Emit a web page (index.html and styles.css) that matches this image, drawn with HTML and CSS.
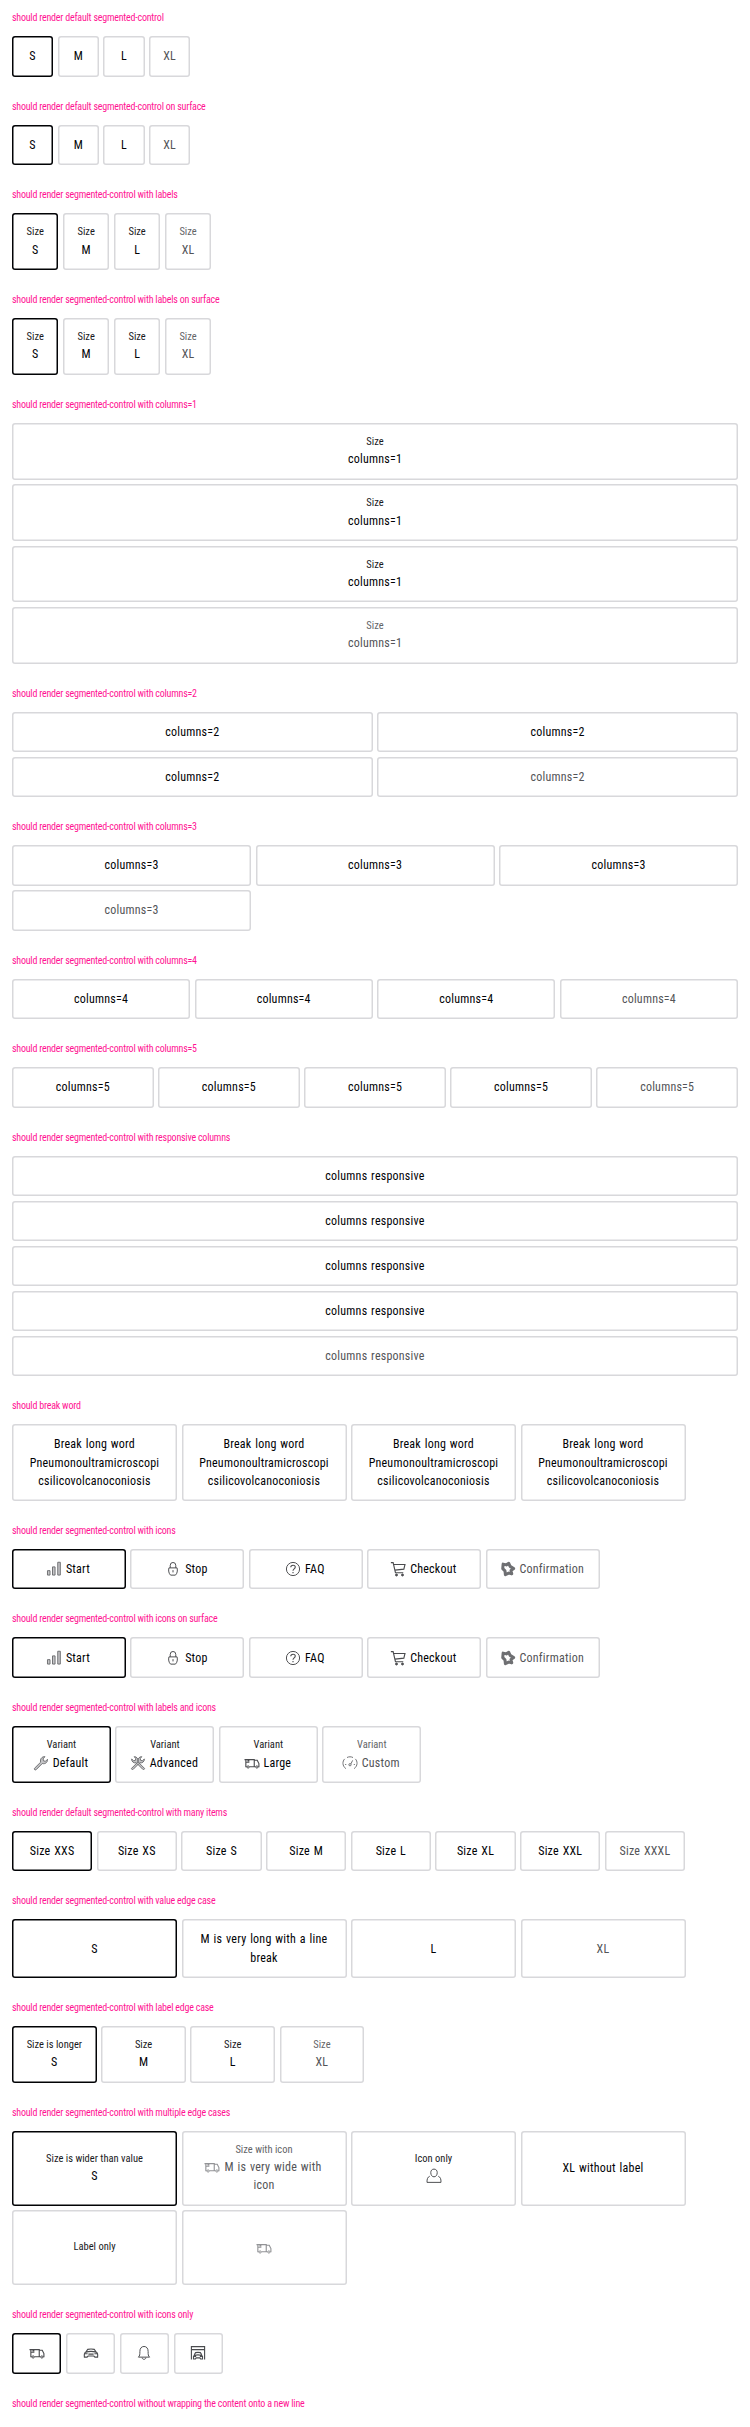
FILE: index.html
```html
<!DOCTYPE html>
<html lang="en">
<head>
<meta charset="utf-8">
<title>Segmented control</title>
<link rel="stylesheet" href="styles.css">
</head>
<body>
<svg class="sprite" aria-hidden="true">
  <symbol id="chart" viewBox="0 0 24 24"><path class="tint" d="M3.300 14.200h3.400v5.900H3.300zM10 9.200h3.400v10.900H10zM17 3h3.400v17.100H17z"/></symbol>
  <symbol id="lock" viewBox="0 0 24 24"><path d="M8.300 10.500V7.200a3.700 3.900 0 0 1 7.400 0v3.300M6.600 10.500h10.800c1 3.700 .2 7.500-2.200 9.700H8.800c-2.400-2.200-3.200-6-2.200-9.700zM12 13.500v3"/></symbol>
  <symbol id="help" viewBox="0 0 24 24"><circle cx="12" cy="12" r="8.800"/><path class="bold" d="M9 9.600C9.100 6.200 15 6 15 9.400c0 2.500-3 2.300-3 5M12 16v1.600"/></symbol>
  <symbol id="cart" viewBox="0 0 24 24"><path class="bold" d="M2.500 3.500h3L8.600 17H19M6.300 6h15l-1.500 6.200L8 13.500"/><circle class="solid" cx="10" cy="20" r="1.300"/><circle class="solid" cx="18" cy="20" r="1.300"/></symbol>
  <symbol id="gear" viewBox="0 0 24 24"><path class="thick" d="M5.500 5.500l4.300 1L13 4.500l1.800 4 4.700 3-3.500 2.500 1 4.500-4-1-4.500 2-.5-5-3-3z"/></symbol>
  <symbol id="wrench" viewBox="0 0 24 24"><path class="tint" d="M3.200 19.200l8.300-8.300c-1-4 1.500-7.500 5.700-7.400L14.800 6.500l.5 2.700 2.700.5 2.700-2.700c.3 4.200-3.200 6.800-7 5.700l-8.300 8.300c-1.500.8-3-.6-2.200-1.800z"/></symbol>
  <symbol id="tools" viewBox="0 0 24 24"><path class="tint" d="M3.500 19l8.500-8.500c-.8-3.800 1.500-7 5-7L15 6.200l.5 2.300 2.500.5 2.500-2.500c.3 3.800-3 6-6.200 5.200L5.500 20.500c-1.500.6-2.800-.6-2-1.500zM20.500 19L12 10.500c.8-3.800-1.500-7-5-7L9 6.200l-.5 2.300L6 9 3.500 6.500C3.200 10.300 6.500 12.500 9.700 11.700l8.800 8.800c1.500.6 2.800-.6 2-1.500z"/></symbol>
  <symbol id="truck" viewBox="0 0 24 24"><path class="bold" d="M5.200 17H3.800V7.500H15V17H8.500M15 8.300h4l2.200 4.500V17h-1M15 17h1.800M2 7.500h3M4 11h4.500M6 9.200h2.500"/><circle cx="6.800" cy="17.300" r="1.500"/><circle cx="18.500" cy="17.300" r="1.500"/></symbol>
  <symbol id="gauge" viewBox="0 0 24 24"><path d="M6.500 19.500C1.500 16 1.700 9.500 5 6.500M8 4.700c2.500-1.300 5.500-1.300 8 0M19 6.500c3.300 3 3.500 9.500-1.500 13M15.500 8.500l-2.300 4.700M5.500 14h1.500M17 14h1.500"/><circle cx="12" cy="14.300" r="1.500"/></symbol>
  <symbol id="car" viewBox="0 0 24 24"><path class="bold" d="M5.200 10.800L7.500 7.200c3-.7 6-.7 9 0l2.300 3.600M5.200 10.800c4.500-1.200 9-1.200 13.600 0M5.200 10.800c-2.200 1-2.500 3-2 6.700h3.500l1.500-1.500h7.600l1.500 1.500h3.500c.5-3.700.2-5.700-2-6.700M4 13h3.500M16.500 13H20M8.500 13.500h7"/></symbol>
  <symbol id="bell" viewBox="0 0 24 24"><path d="M4.500 17.500c2-1.700 2-3.500 2-7.500 0-4.300 2.200-6.700 5.500-6.700s5.500 2.400 5.500 6.700c0 4 0 5.800 2 7.500zM9.500 18.200c.2 3 4.800 3 5 0"/></symbol>
  <symbol id="garage" viewBox="0 0 24 24"><path class="bold" d="M3.200 20.500V3.500h17.600v17M3.200 7.500h17.600M7 14.500l1.700-3c2.200-.5 4.400-.5 6.600 0l1.700 3M6 20v-3.500c1.500-2.700 10.500-2.700 12 0V20h-2.500l-1-1.500h-5l-1 1.500zM7 16.500h2.500M14.500 16.500H17"/></symbol>
  <symbol id="user" viewBox="0 0 24 24"><path d="M12 2.800c-2.800 0-4.300 2-4.300 4.700 0 3.200 1.700 5.600 4.300 5.600s4.300-2.400 4.300-5.600c0-2.700-1.500-4.700-4.300-4.700zM6.300 12.300C3.500 13.500 2.500 16 2.700 20.500h18.600c.2-4.500-.8-7-3.600-8.200"/></symbol>
</svg>

<section>
  <h2>should render default segmented-control</h2>
  <div class="group w-s"><div class="item on">S</div><div class="item">M</div><div class="item">L</div><div class="item off">XL</div></div>
</section>
<section>
  <h2>should render default segmented-control on surface</h2>
  <div class="group w-s"><div class="item on">S</div><div class="item">M</div><div class="item">L</div><div class="item off">XL</div></div>
</section>
<section>
  <h2>should render segmented-control with labels</h2>
  <div class="group w-label"><div class="item on"><small>Size</small>S</div><div class="item"><small>Size</small>M</div><div class="item"><small>Size</small>L</div><div class="item off"><small>Size</small>XL</div></div>
</section>
<section>
  <h2>should render segmented-control with labels on surface</h2>
  <div class="group w-label"><div class="item on"><small>Size</small>S</div><div class="item"><small>Size</small>M</div><div class="item"><small>Size</small>L</div><div class="item off"><small>Size</small>XL</div></div>
</section>
<section>
  <h2>should render segmented-control with columns=1</h2>
  <div class="group"><div class="item"><small>Size</small>columns=1</div><div class="item"><small>Size</small>columns=1</div><div class="item"><small>Size</small>columns=1</div><div class="item off"><small>Size</small>columns=1</div></div>
</section>
<section>
  <h2>should render segmented-control with columns=2</h2>
  <div class="group cols-2"><div class="item">columns=2</div><div class="item">columns=2</div><div class="item">columns=2</div><div class="item off">columns=2</div></div>
</section>
<section>
  <h2>should render segmented-control with columns=3</h2>
  <div class="group cols-3"><div class="item">columns=3</div><div class="item">columns=3</div><div class="item">columns=3</div><div class="item off">columns=3</div></div>
</section>
<section>
  <h2>should render segmented-control with columns=4</h2>
  <div class="group cols-4"><div class="item">columns=4</div><div class="item">columns=4</div><div class="item">columns=4</div><div class="item off">columns=4</div></div>
</section>
<section>
  <h2>should render segmented-control with columns=5</h2>
  <div class="group cols-5"><div class="item">columns=5</div><div class="item">columns=5</div><div class="item">columns=5</div><div class="item">columns=5</div><div class="item off">columns=5</div></div>
</section>
<section>
  <h2>should render segmented-control with responsive columns</h2>
  <div class="group"><div class="item">columns responsive</div><div class="item">columns responsive</div><div class="item">columns responsive</div><div class="item">columns responsive</div><div class="item off">columns responsive</div></div>
</section>
<section>
  <h2>should break word</h2>
  <div class="group w-max"><div class="item">Break long word<br>Pneumonoultramicroscopi<br>csilicovolcanoconiosis</div><div class="item">Break long word<br>Pneumonoultramicroscopi<br>csilicovolcanoconiosis</div><div class="item">Break long word<br>Pneumonoultramicroscopi<br>csilicovolcanoconiosis</div><div class="item">Break long word<br>Pneumonoultramicroscopi<br>csilicovolcanoconiosis</div></div>
</section>
<section>
  <h2>should render segmented-control with icons</h2>
  <div class="group w-icon">
    <div class="item on"><span><svg class="icon"><use href="#chart"/></svg>Start</span></div>
    <div class="item"><span><svg class="icon"><use href="#lock"/></svg>Stop</span></div>
    <div class="item"><span><svg class="icon"><use href="#help"/></svg>FAQ</span></div>
    <div class="item"><span><svg class="icon"><use href="#cart"/></svg>Checkout</span></div>
    <div class="item off"><span><svg class="icon"><use href="#gear"/></svg>Confirmation</span></div>
  </div>
</section>
<section>
  <h2>should render segmented-control with icons on surface</h2>
  <div class="group w-icon">
    <div class="item on"><span><svg class="icon"><use href="#chart"/></svg>Start</span></div>
    <div class="item"><span><svg class="icon"><use href="#lock"/></svg>Stop</span></div>
    <div class="item"><span><svg class="icon"><use href="#help"/></svg>FAQ</span></div>
    <div class="item"><span><svg class="icon"><use href="#cart"/></svg>Checkout</span></div>
    <div class="item off"><span><svg class="icon"><use href="#gear"/></svg>Confirmation</span></div>
  </div>
</section>
<section>
  <h2>should render segmented-control with labels and icons</h2>
  <div class="group w-variant">
    <div class="item on"><small>Variant</small><span><svg class="icon"><use href="#wrench"/></svg>Default</span></div>
    <div class="item"><small>Variant</small><span><svg class="icon"><use href="#tools"/></svg>Advanced</span></div>
    <div class="item"><small>Variant</small><span><svg class="icon"><use href="#truck"/></svg>Large</span></div>
    <div class="item off"><small>Variant</small><span><svg class="icon"><use href="#gauge"/></svg>Custom</span></div>
  </div>
</section>
<section>
  <h2>should render default segmented-control with many items</h2>
  <div class="group w-many"><div class="item on">Size XXS</div><div class="item">Size XS</div><div class="item">Size S</div><div class="item">Size M</div><div class="item">Size L</div><div class="item">Size XL</div><div class="item">Size XXL</div><div class="item off">Size XXXL</div></div>
</section>
<section>
  <h2>should render segmented-control with value edge case</h2>
  <div class="group w-max"><div class="item on">S</div><div class="item">M is very long with a line<br>break</div><div class="item">L</div><div class="item off">XL</div></div>
</section>
<section>
  <h2>should render segmented-control with label edge case</h2>
  <div class="group w-longer"><div class="item on"><small>Size is longer</small>S</div><div class="item"><small>Size</small>M</div><div class="item"><small>Size</small>L</div><div class="item off"><small>Size</small>XL</div></div>
</section>
<section>
  <h2>should render segmented-control with multiple edge cases</h2>
  <div class="group w-max even">
    <div class="item on"><small>Size is wider than value</small>S</div>
    <div class="item off muted"><small>Size with icon</small><span><svg class="icon"><use href="#truck"/></svg>M is very wide with<br></span>icon</div>
    <div class="item"><small>Icon only</small><svg class="icon alone"><use href="#user"/></svg></div>
    <div class="item">XL without label</div>
    <div class="item"><small>Label only</small></div>
    <div class="item off muted"><svg class="icon alone"><use href="#truck"/></svg></div>
  </div>
</section>
<section>
  <h2>should render segmented-control with icons only</h2>
  <div class="group w-glyph">
    <div class="item on"><svg class="icon alone"><use href="#truck"/></svg></div>
    <div class="item"><svg class="icon alone"><use href="#car"/></svg></div>
    <div class="item"><svg class="icon alone"><use href="#bell"/></svg></div>
    <div class="item"><svg class="icon alone"><use href="#garage"/></svg></div>
  </div>
</section>
<section>
  <h2>should render segmented-control without wrapping the content onto a new line</h2>
</section>
</body>
</html>
```
FILE: styles.css
```css
* { box-sizing: border-box; }
html { overflow: hidden; }
body {
  margin: 0;
  padding: 10px 12px 0;
  background: #fff;
  color: #010205;
  font-family: Roboto, "Liberation Sans", sans-serif;
  font-size: 12px;
  font-stretch: 85%;
}
.sprite { display: none; }
section { padding-bottom: 22px; }
section:last-child { padding-bottom: 0; }
h2 {
  margin: 0 0 10px;
  height: 16px;
  font-size: 10px;
  font-weight: 400;
  line-height: 16px;
  letter-spacing: -0.22px;
  color: #ff1493;
  white-space: nowrap;
}
.group { display: grid; gap: 4.5px; }
.cols-2 { grid-template-columns: repeat(2, 1fr); }
.cols-3 { grid-template-columns: repeat(3, 1fr); }
.cols-4 { grid-template-columns: repeat(4, 1fr); }
.cols-5 { grid-template-columns: repeat(5, 1fr); }
.w-s { grid-template-columns: repeat(4, 41.2px); }
.w-label { grid-template-columns: repeat(4, 46.45px); }
.w-max { grid-template-columns: repeat(4, 165px); }
.w-icon { grid-template-columns: repeat(5, 113.95px); }
.w-variant { grid-template-columns: repeat(4, 98.95px); }
.w-many { grid-template-columns: repeat(8, 80.2px); }
.w-longer { grid-template-columns: repeat(4, 84.7px); }
.w-glyph { grid-template-columns: repeat(4, 49.4px); }
.even { grid-auto-rows: 1fr; }
.item {
  display: flex;
  flex-direction: column;
  align-items: center;
  justify-content: center;
  min-height: 40.5px;
  padding: 11.2px 4px;
  border-radius: 3px;
  box-shadow: inset 0 0 0 1.5px #d8d8db;
  line-height: 18.1px;
  letter-spacing: 0.22px;
  word-spacing: 0.8px;
  text-align: center;
  white-space: nowrap;
}
.on { box-shadow: inset 0 0 0 1.5px #010205; }
.off { color: #535457; }
small {
  display: block;
  font-size: 10.5px;
  line-height: 16.4px;
  letter-spacing: 0;
  word-spacing: 0;
  opacity: 0.9;
}
.item > span { height: 18.1px; }
.icon {
  width: 18px;
  height: 18px;
  margin: 0 3px 0 -3px;
  vertical-align: top;
  fill: none;
  stroke: #4a4b4e;
  stroke-width: 1.3;
}
.alone { display: block; margin: 0; }
.off .icon { stroke: #6e6f72; }
.muted .icon { stroke: #929396; }
.bold { stroke-width: 1.5; }
.thick { stroke-width: 4; stroke-linejoin: round; }
.solid { fill: #4a4b4e; }
.tint { fill: #c4c4c6; stroke: #6e6f72; }
```
